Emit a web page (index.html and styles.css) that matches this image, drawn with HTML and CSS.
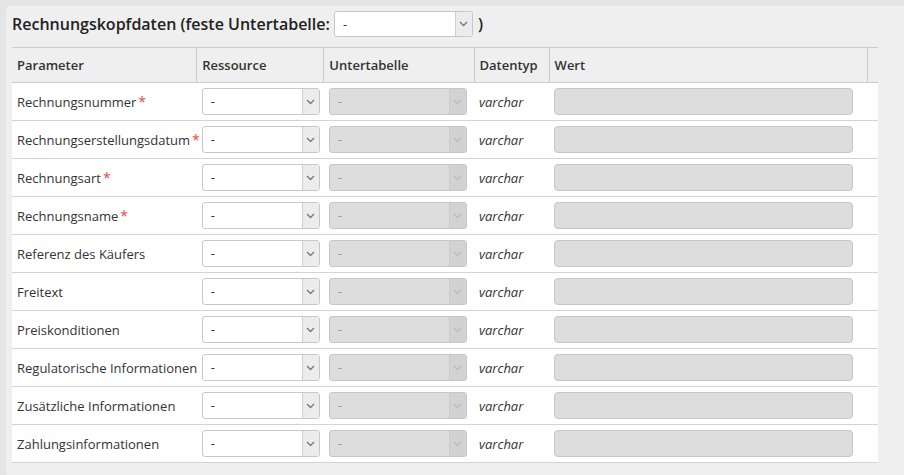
FILE: index.html
```html
<!DOCTYPE html>
<html lang="de">
<head>
<meta charset="utf-8">
<link rel="stylesheet" href="styles.css">
</head>
<body>
<div class="panel">
  <div class="title">
    <span class="title-text">Rechnungskopfdaten (feste Untertabelle:</span>
    <div class="select title-select"><span class="val">-</span><span class="arrow"><svg width="9" height="6" viewBox="0 0 9 6"><path d="M1 1 L4.5 4.5 L8 1" fill="none" stroke="#777" stroke-width="1.3"/></svg></span></div>
    <span class="title-text paren">)</span>
  </div>
  <table class="grid">
    <thead>
      <tr>
        <th class="c-param">Parameter</th>
        <th class="c-res">Ressource</th>
        <th class="c-sub">Untertabelle</th>
        <th class="c-type">Datentyp</th>
        <th class="c-val">Wert</th>
        <th class="c-gut"></th>
      </tr>
    </thead>
    <tbody id="rows"></tbody>
  </table>
</div>
<script src="app.js"></script>
</body>
</html>
```
FILE: app.js
```js
const rows = [
  ["Rechnungsnummer", true],
  ["Rechnungserstellungsdatum", true],
  ["Rechnungsart", true],
  ["Rechnungsname", true],
  ["Referenz des Käufers", false],
  ["Freitext", false],
  ["Preiskonditionen", false],
  ["Regulatorische Informationen", false],
  ["Zusätzliche Informationen", false],
  ["Zahlungsinformationen", false]
];
const chev = c => '<svg width="9" height="6" viewBox="0 0 9 6"><path d="M1 1 L4.5 4.5 L8 1" fill="none" stroke="' + c + '" stroke-width="1.3"/></svg>';
const tb = document.getElementById('rows');
tb.innerHTML = rows.map(([n, req]) =>
  '<tr>' +
  '<td class="c-param">' + n + (req ? '<span class="req">*</span>' : '') + '</td>' +
  '<td class="c-res"><div class="select res"><span class="val">-</span><span class="arrow">' + chev('#777') + '</span></div></td>' +
  '<td class="c-sub"><div class="select sub disabled"><span class="val">-</span><span class="arrow">' + chev('#bbb') + '</span></div></td>' +
  '<td class="c-type"><i>varchar</i></td>' +
  '<td class="c-val" colspan="2"><div class="input"></div></td>' +
  '</tr>'
).join('');
```
FILE: styles.css
```css
html, body {
  margin: 0;
  padding: 0;
}
body {
  background: #e5e5e5;
  font-family: "Open Sans", "Liberation Sans", sans-serif;
  font-size: 13px;
  color: #333;
  overflow: hidden;
}
.panel {
  margin: 6px 0 0 6px;
  background: #efefef;
  border-top-left-radius: 4px;
  border-bottom-left-radius: 4px;
  padding: 5px 0 13px 6px;
}
.title {
  display: flex;
  align-items: center;
  height: 26px;
  margin-bottom: 10px;
}
.title-text {
  font-size: 16px;
  font-weight: 600;
  color: #222;
}
.paren {
  margin-left: 5px;
}
.select {
  display: flex;
  box-sizing: border-box;
  border: 1px solid #c8c8c8;
  border-radius: 3px;
  background: #fff;
  height: 27px;
  overflow: hidden;
}
.select .val {
  flex: 1;
  padding-left: 8px;
  line-height: 25px;
  font-size: 13px;
  color: #333;
}
.select .arrow {
  width: 16px;
  border-left: 1px solid #d0d0d0;
  background: #ececec;
  display: flex;
  align-items: center;
  justify-content: center;
}
.title-select {
  width: 139px;
  height: 26px;
  margin-left: 4px;
}
.grid {
  border-collapse: collapse;
  width: 866px;
  table-layout: fixed;
}
.grid th {
  height: 34px;
  text-align: left;
  font-weight: 600;
  font-size: 13px;
  color: #333;
  padding: 0 5px;
  border-top: 1px solid #cbcbcb;
  border-bottom: 1px solid #cbcbcb;
  border-left: 1px solid #cbcbcb;
  background: #efefef;
}
.grid th:first-child {
  border-left: none;
}
.grid td {
  height: 37px;
  padding: 0 5px;
  background: #fff;
  border-bottom: 1px solid #d3d3d3;
  white-space: nowrap;
}
.c-param { width: 174px; }
.c-res { width: 116px; }
.c-sub { width: 139px; }
.c-type { width: 64px; }
.c-val { width: 307px; }
.c-gut { width: 0; }
.req {
  color: #e8474a;
  margin-left: 2px;
  font-size: 14px;
}
.select.res {
  width: 118px;
}
.select.sub {
  width: 138px;
}
.select.disabled {
  background: #dddddd;
  border-color: #c6c6c6;
}
.select.disabled .val {
  color: #999;
}
.select.disabled .arrow {
  background: #d2d2d2;
  border-left-color: #cbcbcb;
}
.c-type i {
  font-style: italic;
}
.input {
  box-sizing: border-box;
  width: 299px;
  height: 27px;
  background: #dddddd;
  border: 1px solid #c6c6c6;
  border-radius: 4px;
}
```
